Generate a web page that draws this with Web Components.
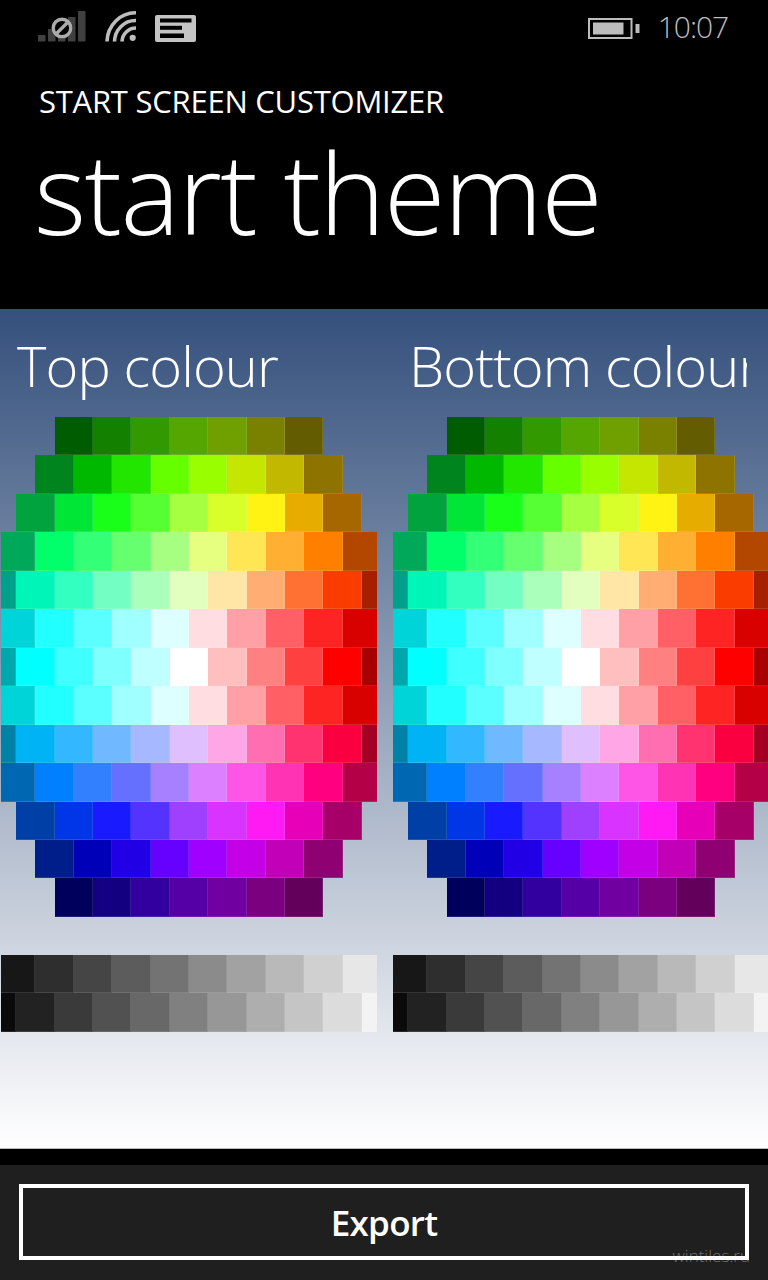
<!DOCTYPE html>
<html>
<head>
<meta charset="utf-8">
<title>start theme</title>
<style>
  html, body { margin: 0; padding: 0; background: #000; }
  body { width: 768px; height: 1280px; overflow: hidden; display: flex; flex-direction: column; font-family: "Open Sans", "Noto Sans", sans-serif; color: #fff; }
</style>
</head>
<body>
<status-bar time="10:07"></status-bar>
<page-header app="START SCREEN CUSTOMIZER" title="start theme"></page-header>
<theme-panel>
  <color-column label="Top colour"></color-column>
  <color-column label="Bottom colour"></color-column>
</theme-panel>
<app-bar>
  <flat-button>Export</flat-button>
</app-bar>
<water-mark>wintiles.ru</water-mark>

<script>
// every row is centred and clipped by the column, so the long rows lose their ends
const COLOR_ROWS = [
  ["#005c00","#138000","#339900","#55a600","#70a000","#7a8000","#635c00"],
  ["#00851e","#00b800","#22e600","#66ff00","#99ff00","#c4e600","#c2b800","#8f7300"],
  ["#00a33d","#00e636","#1aff1a","#55ff33","#a6ff40","#d9ff2b","#fff314","#e6ad00","#a66700"],
  ["#00a85a","#00ff6a","#33ff77","#66ff70","#a6ff80","#e6ff80","#ffe655","#ffb033","#ff8000","#b34700"],
  ["#00a08a","#00f5b8","#33ffc0","#73ffc4","#aaffbb","#e3ffc0","#ffe5a6","#ffad73","#ff7033","#fa3c00","#a61f00"],
  ["#00d4d9","#22ffff","#5cffff","#a0ffff","#ddffff","#ffdde0","#ff9fa6","#ff6066","#ff2424","#d90000"],
  ["#00a8ad","#00ffff","#40ffff","#80ffff","#bfffff","#ffffff","#ffbfbf","#ff8080","#ff4040","#ff0000","#a80000"],
  ["#00d4d9","#22ffff","#5cffff","#a0ffff","#ddffff","#ffdde0","#ff9fa6","#ff6066","#ff2424","#d90000"],
  ["#0082a6","#00b3f5","#33b8ff","#70b8ff","#a6b8ff","#e0bfff","#ffa6e6","#ff6eb0","#ff3370","#fa0040","#a30023"],
  ["#0068b3","#0080ff","#3380ff","#6670ff","#a680ff","#dd80ff","#ff55e6","#ff33b3","#ff0080","#b30047"],
  ["#0040a6","#0036e6","#1a1aff","#5533ff","#a040ff","#d933ff","#ff1af3","#e600b8","#a60068"],
  ["#001e8a","#0000b8","#2200e6","#6600ff","#a000ff","#c400e6","#c200b8","#8f0073"],
  ["#00005c","#130080","#3300a0","#5500a6","#7000a0","#7a0080","#63005c"]
];
const GRAY_ROWS = [
  ["#171717","#2e2e2e","#454545","#5c5c5c","#737373","#8b8b8b","#a2a2a2","#b9b9b9","#d0d0d0","#e7e7e7"],
  ["#0a0a0a","#222222","#3a3a3a","#515151","#686868","#808080","#979797","#aeaeae","#c5c5c5","#dcdcdc","#f3f3f3"]
];

class StatusBar extends HTMLElement {
  constructor(){
    super();
    this.attachShadow({mode:"open"});
  }

  connectedCallback(){
    this.shadowRoot.innerHTML = `
    <style>
      :host { display: flex; height: 60px; flex: none; background: #000; align-items: flex-start; }
      svg { display: block; flex: none; }
      .time { margin: 8px 0 0 18px; font-size: 30px; line-height: 38px; font-weight: 300; color: #bdbdbd; letter-spacing: -1.1px; }
      .spacer { flex: 1; }
      .end { flex: none; width: 40px; }
    </style>
    <svg width="200" height="60" viewBox="0 0 200 60">
      <g fill="#404040">
        <rect x="38" y="35" width="7.5" height="6.5"/>
        <rect x="48" y="29" width="7.5" height="12.5"/>
        <rect x="58" y="23" width="7.5" height="18.5"/>
        <rect x="68" y="17" width="7.5" height="24.5"/>
        <rect x="78" y="11" width="7.5" height="30.5"/>
      </g>
      <circle cx="62" cy="28" r="10.5" fill="#000"/>
      <circle cx="62" cy="28" r="8.8" fill="none" stroke="#ababab" stroke-width="3.4"/>
      <path d="M56 34 68 22" stroke="#ababab" stroke-width="3.4"/>
      <g fill="none" stroke="#bdbdbd" stroke-width="3.6">
        <path d="M107 41.5A28.5 29.5 0 0 1 136 12.8"/>
        <path d="M114.5 41.5A21 21.5 0 0 1 136 20.5"/>
        <path d="M122 41.5A14 14 0 0 1 136 28"/>
      </g>
      <circle cx="132.7" cy="37.8" r="3.1" fill="#bdbdbd"/>
      <rect x="155" y="15" width="41" height="27" rx="2" fill="#c4c4c4"/>
      <g fill="#000">
        <rect x="160" y="18.5" width="31.5" height="4"/>
        <rect x="160" y="25.8" width="22" height="4"/>
        <rect x="160" y="33.5" width="24" height="4.5"/>
      </g>
    </svg>
    <div class="spacer"></div>
    <svg width="52" height="60" viewBox="0 0 52 60">
      <rect x="1" y="19" width="42.5" height="19" fill="none" stroke="#bdbdbd" stroke-width="2"/>
      <rect x="5" y="22.5" width="30.5" height="12" fill="#bdbdbd"/>
      <rect x="47.5" y="24" width="4" height="9" fill="#bdbdbd"/>
    </svg>
    <span class="time">${this.getAttribute("time")}</span>
    <span class="end"></span>
    `;
  }
}

class PageHeader extends HTMLElement {
  constructor(){
    super();
    this.attachShadow({mode:"open"});
  }

  connectedCallback(){
    this.shadowRoot.innerHTML = `
    <style>
      :host { display: block; height: 249px; flex: none; background: #000; padding-left: 39px; overflow: hidden; }
      .app { margin: 22px 0 0; font-size: 31px; line-height: 38px; font-weight: 400; letter-spacing: -.24px; }
      .title { margin: 22px 0 0 -5px; font-size: 112px; line-height: 100px; font-weight: 300; letter-spacing: -1.6px; white-space: nowrap; }
    </style>
    <div class="app">${this.getAttribute("app")}</div>
    <div class="title">${this.getAttribute("title")}</div>
    `;
  }
}

class ThemePanel extends HTMLElement {
  constructor(){
    super();
    this.attachShadow({mode:"open"});
    this.shadowRoot.innerHTML = `
    <style>
      :host { display: flex; gap: 16px; height: 839px; flex: none; padding-left: 1px; overflow: hidden;
        background: linear-gradient(180deg, #34507c 0%, #ffffff 100%); }
    </style>
    <slot></slot>
    `;
  }
}

class ColorColumn extends HTMLElement {
  constructor(){
    super();
    this.attachShadow({mode:"open"});
  }

  getRows(rows){
    return rows.map(row => `<div class="row">${row.map(c => `<i style="background:${c}"></i>`).join("")}</div>`).join("");
  }

  connectedCallback(){
    this.shadowRoot.innerHTML = `
    <style>
      :host { display: block; flex: none; width: 376px; }
      h2 { margin: 16px 22px 0 16px; height: 92px; font-size: 56px; line-height: 80px; font-weight: 300; letter-spacing: -.9px; white-space: nowrap; overflow: hidden; }
      .grid + .grid { margin-top: 38px; }
      .row { display: flex; justify-content: center; height: 38.46px; overflow: hidden; }
      i { display: block; flex: none; width: 38.4px; height: 100%; box-shadow: inset -1px -1px 0 rgba(255,255,255,.12); }
    </style>
    <h2>${this.getAttribute("label")}</h2>
    <div class="grid">${this.getRows(COLOR_ROWS)}</div>
    <div class="grid">${this.getRows(GRAY_ROWS)}</div>
    `;
  }
}

class AppBar extends HTMLElement {
  constructor(){
    super();
    this.attachShadow({mode:"open"});
    this.shadowRoot.innerHTML = `
    <style>
      :host { display: block; flex: 1; border-top: 1px solid #bbb; background: #000; padding-top: 16px; }
      .bar { background: #1f1f1f; height: 115px; box-sizing: border-box; padding: 19px 19px 0; }
    </style>
    <div class="bar"><slot></slot></div>
    `;
  }
}

class FlatButton extends HTMLElement {
  constructor(){
    super();
    this.attachShadow({mode:"open"});
    this.shadowRoot.innerHTML = `
    <style>
      :host { display: flex; align-items: center; justify-content: center; box-sizing: border-box; width: 730px; height: 76px; border: 4px solid #fff; font-size: 35px; font-weight: 600; color: #fff; letter-spacing: -.7px; }
    </style>
    <slot></slot>
    `;
  }
}

class WaterMark extends HTMLElement {
  constructor(){
    super();
    this.attachShadow({mode:"open"});
    this.shadowRoot.innerHTML = `
    <style>
      :host { position: absolute; right: 18px; top: 1245px; font-size: 17px; line-height: 22px; font-weight: 300; color: rgba(255,255,255,.36); }
    </style>
    <slot></slot>
    `;
  }
}

customElements.define("status-bar", StatusBar);
customElements.define("page-header", PageHeader);
customElements.define("theme-panel", ThemePanel);
customElements.define("color-column", ColorColumn);
customElements.define("app-bar", AppBar);
customElements.define("flat-button", FlatButton);
customElements.define("water-mark", WaterMark);
</script>
</body>
</html>
